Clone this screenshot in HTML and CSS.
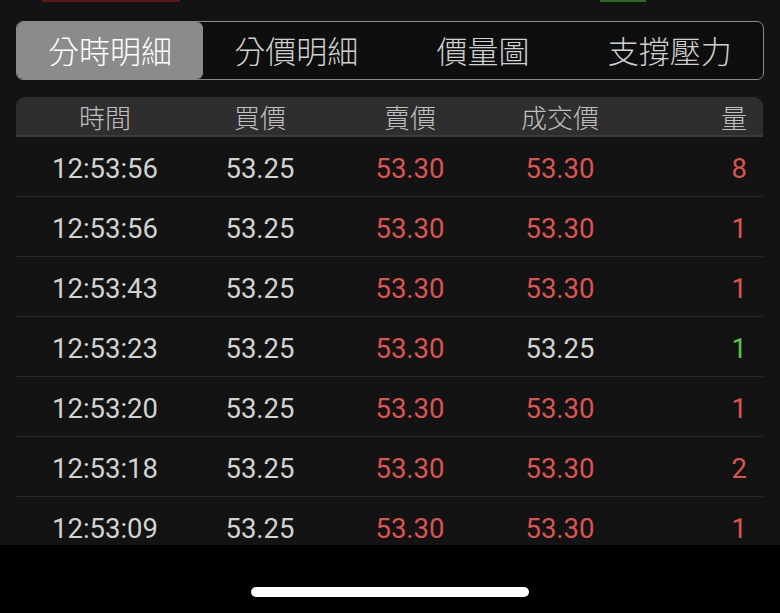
FILE: index.html
```html
<!DOCTYPE html>
<html lang="zh-Hant">
<head>
<meta charset="utf-8">
<link rel="stylesheet" href="styles.css">
</head>
<body>
<div class="screen">
  <div class="topstrip">
    <span class="peek peek-red"></span>
    <span class="peek peek-green"></span>
  </div>
  <div class="segmented">
    <div class="seg active">分時明細</div>
    <div class="seg">分價明細</div>
    <div class="seg">價量圖</div>
    <div class="seg">支撐壓力</div>
  </div>
  <div class="table">
    <div class="row head">
      <div class="c">時間</div>
      <div class="c">買價</div>
      <div class="c">賣價</div>
      <div class="c">成交價</div>
      <div class="c r">量</div>
    </div>
    <div class="row">
      <div class="c">12:53:56</div><div class="c">53.25</div><div class="c up">53.30</div><div class="c up">53.30</div><div class="c r up">8</div>
    </div>
    <div class="row">
      <div class="c">12:53:56</div><div class="c">53.25</div><div class="c up">53.30</div><div class="c up">53.30</div><div class="c r up">1</div>
    </div>
    <div class="row">
      <div class="c">12:53:43</div><div class="c">53.25</div><div class="c up">53.30</div><div class="c up">53.30</div><div class="c r up">1</div>
    </div>
    <div class="row">
      <div class="c">12:53:23</div><div class="c">53.25</div><div class="c up">53.30</div><div class="c">53.25</div><div class="c r down">1</div>
    </div>
    <div class="row">
      <div class="c">12:53:20</div><div class="c">53.25</div><div class="c up">53.30</div><div class="c up">53.30</div><div class="c r up">1</div>
    </div>
    <div class="row">
      <div class="c">12:53:18</div><div class="c">53.25</div><div class="c up">53.30</div><div class="c up">53.30</div><div class="c r up">2</div>
    </div>
    <div class="row">
      <div class="c">12:53:09</div><div class="c">53.25</div><div class="c up">53.30</div><div class="c up">53.30</div><div class="c r up">1</div>
    </div>
  </div>
  <div class="homebar"><span class="pill"></span></div>
</div>
</body>
</html>
```

FILE: styles.css
```css
html, body {
  margin: 0;
  padding: 0;
  background: #131313;
}
.screen {
  width: 780px;
  height: 613px;
  display: flex;
  flex-direction: column;
  background: #131313;
  font-family: Roboto, "Noto Sans CJK TC", sans-serif;
  color: #d6d6d6;
  overflow: hidden;
}
.topstrip {
  height: 21px;
  position: relative;
  flex: none;
}
.peek {
  position: absolute;
  top: 0;
  height: 2px;
}
.peek-red {
  left: 42px;
  width: 138px;
  background: #5c1717;
}
.peek-green {
  left: 600px;
  width: 46px;
  background: #2f6a25;
}
.segmented {
  flex: none;
  margin: 0 16px 0 16px;
  height: 59px;
  box-sizing: border-box;
  border: 1.5px solid #8a8a8a;
  border-radius: 7px;
  display: grid;
  grid-template-columns: 186px 1fr 1fr 1fr;
  overflow: hidden;
  background: #0e0e0e;
}
.seg {
  display: flex;
  align-items: center;
  justify-content: center;
  font-family: "Noto Sans CJK TC", sans-serif;
  font-weight: 300;
  font-size: 31px;
  color: #d0d0d0;
  padding-bottom: 2px;
}
.seg.active {
  background: #8b8b8b;
  color: #ffffff;
  border-radius: 5px 6px 6px 5px;
}
.table {
  flex: none;
  margin: 17px 17px 0 16px;
  height: 448px;
  overflow: hidden;
}
.row {
  display: grid;
  grid-template-columns: 160px 150px 150px 150px 1fr;
  padding: 3px 16px 0 9px;
  height: 60px;
  align-items: center;
  border-bottom: 1.5px solid #262626;
  box-sizing: border-box;
  font-size: 27.5px;
  font-weight: 400;
  color: #d2d2d2;
}
.row.head {
  height: 40px;
  padding-top: 0;
  background: #2e2e2e;
  border-radius: 9px 9px 0 0;
  border-bottom: 2px solid #3d3d3d;
  font-family: "Noto Sans CJK TC", sans-serif;
  font-weight: 300;
  font-size: 26px;
  color: #c0c0c0;
}
.row.head .c {
  line-height: 40px;
}
.c {
  text-align: center;
  white-space: nowrap;
}
.c.r {
  text-align: right;
}
.up {
  color: #dc5450;
}
.down {
  color: #5cc24a;
}
.homebar {
  flex: 1;
  background: #000;
  display: flex;
  justify-content: center;
  align-items: flex-end;
  padding-bottom: 16px;
  box-sizing: border-box;
}
.pill {
  display: block;
  width: 278px;
  height: 10px;
  border-radius: 5px;
  background: #ffffff;
}
```
